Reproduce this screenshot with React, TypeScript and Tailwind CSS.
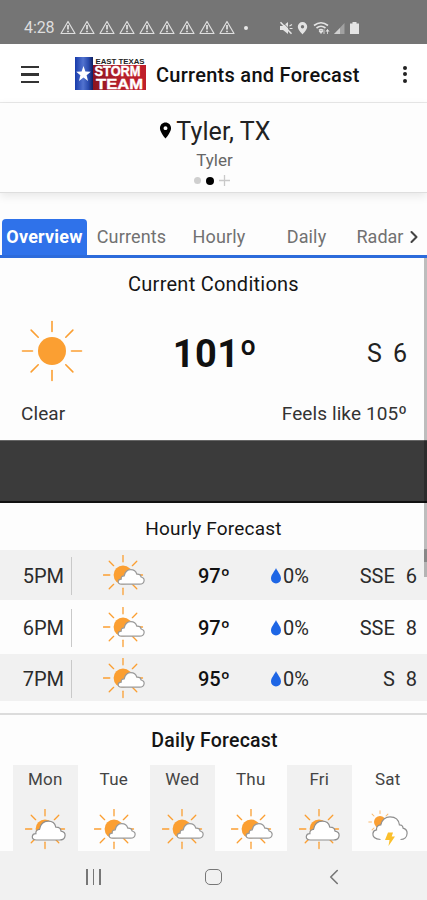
import { ChevronLeft, ChevronRight } from "lucide-react";
import { MdLocationOn } from "react-icons/md";

type Sky = "partly" | "mostly" | "storm";

const tabs = [
  { label: "Currents", className: "w-[89px] tracking-[0.15px]" },
  { label: "Hourly", className: "w-[86px] tracking-[0.15px]" },
  { label: "Daily", className: "w-[89px] tracking-[0.15px]" },
  { label: "Radar", className: "w-[58px]" },
];

const hours = [
  { time: "5PM", temp: "97º", rain: "0%", dir: "SSE", speed: 6, className: "h-[50px] bg-[#f1f1f1]" },
  { time: "6PM", temp: "97º", rain: "0%", dir: "SSE", speed: 8, className: "h-[54px]" },
  { time: "7PM", temp: "95º", rain: "0%", dir: "S", speed: 8, className: "h-[47px] bg-[#f1f1f1]" },
];

const days: { name: string; sky: Sky; shaded: boolean }[] = [
  { name: "Mon", sky: "mostly", shaded: true },
  { name: "Tue", sky: "partly", shaded: false },
  { name: "Wed", sky: "partly", shaded: true },
  { name: "Thu", sky: "partly", shaded: false },
  { name: "Fri", sky: "mostly", shaded: true },
  { name: "Sat", sky: "storm", shaded: false },
];

const angles = [0, 45, 90, 135, 180, 225, 270, 315];

function Rays({ cx, cy, from, to, width }: { cx: number; cy: number; from: number; to: number; width: number }) {
  return (
    <g stroke="#fb9f32" strokeWidth={width} strokeLinecap="round">
      {angles.map((a) => (
        <line key={a} x1={cx + from} y1={cy} x2={cx + to} y2={cy} transform={`rotate(${a} ${cx} ${cy})`} />
      ))}
    </g>
  );
}

function SunIcon() {
  return (
    <svg className="h-[62px] w-[62px]" viewBox="0 0 62 62">
      <Rays cx={31} cy={31} from={19.5} to={29.5} width={1.6} />
      <circle cx="31" cy="31" r="14" fill="#fb9f32" />
    </svg>
  );
}

function SkyIcon({ sky }: { sky: Sky }) {
  if (sky === "storm") {
    return (
      <svg className="h-[42px] w-[44px] shrink-0" viewBox="0 0 44 42">
        <g opacity="0.7">
          <Rays cx={12} cy={13} from={8.5} to={11.2} width={1} />
        </g>
        <circle cx="12" cy="13" r="6" fill="#fb9f32" />
        <path
          d="M12.5 30.5C6.5 30.500 4.600 27.200 4.900 24.600c.2-2 1.800-3.400 3.600-3.700-.3-3 1.400-4.900 4.300-5C14 10.500 18 7.800 22 7.800c5.200 0 8.800 3 9.400 8 2.100-.2 3.600 1.400 3.600 3.300 2.700.7 4.200 2.700 4.100 5.200-.1 3.500-2.600 6.200-6.600 6.200"
          fill="#fff"
          stroke="#8f8f8f"
          strokeWidth="1.200"
        />
        <path d="M20 23.500h5l-1.300 4h3.300l-6.500 9.500 1-6H17z" fill="#fbc02d" />
      </svg>
    );
  }

  return (
    <svg className="h-[42px] w-[44px] shrink-0" viewBox="0 0 44 42">
      <Rays cx={20} cy={20} from={13.2} to={19.5} width={1.3} />
      <circle cx="20" cy="20" r="9.4" fill="#fb9f32" />
      {sky === "partly" ? (
        <path
          d="M18.500 29.200c-2.500 0-3.500-1.300-3.300-2.800.2-1.600 1.600-2.300 3-2.300-.2-2 .9-3.300 3-3.300.9-4.200 3.600-6.200 6.600-6.200 3.300 0 5.200 1.800 6 4.600 2.700-.2 4 1 4.300 2.800 2.200.6 3.200 2 3 3.700-.3 2.200-2 3.500-4.600 3.500z"
          fill="#fff"
          stroke="#999"
          strokeWidth="1.200"
        />
      ) : (
        <path
          d="M11.500 31c-3 0-4.400-1.500-4.200-3.500.2-1.900 1.700-2.900 3.600-2.900-.4-2.600 1.100-4.100 3.600-4.200 1-5.500 4.600-8.200 8.700-8.200 4.300 0 6.800 2.300 7.600 5.900 3.200-.1 5 1.500 5.200 4 2.900.6 4.300 2.300 4.100 4.500-.3 2.800-2.400 4.400-5.600 4.400z"
          fill="#fff"
          stroke="#8f8f8f"
          strokeWidth="1.200"
        />
      )}
    </svg>
  );
}

function WarningIcon() {
  return (
    <svg className="h-[15px] w-[16px]" viewBox="0 0 16 15" fill="none" stroke="#dedede" strokeWidth="1.200">
      <path d="M8 1.500 15 13.500H1z" strokeLinejoin="round" />
      <path d="M8 5v4.500M8 10.800v1.500" strokeWidth="1.800" />
    </svg>
  );
}

function StatusBar() {
  return (
    <div className="flex h-[44px] items-center bg-[#757575] pt-[11px] pl-[24px] text-[#dedede]">
      <span className="w-[34px] text-[16px] tracking-[-0.1px]">4:28</span>
      <div className="flex w-[180px] gap-[3.900px] pl-[1.500px]">
        {Array.from({ length: 9 }, (_, i) => (
          <WarningIcon key={i} />
        ))}
      </div>
      <span className="ml-[6px] size-[4px] rounded-full bg-[#e8e8e8]" />
      <svg className="ml-[31px] h-[14px] w-[82px]" viewBox="0 0 82 14" fill="#e4e4e4">
        {/* muted speaker */}
        <path d="M1 5h3l5-4v12L4 9H1z" />
        <path d="M10.500 5l2.500-1.500M10.500 7.500h3" stroke="#e4e4e4" strokeWidth="1.200" />
        <path d="M1.500 1.200 12.500 12.800" stroke="#e4e4e4" strokeWidth="1.500" />
        <path d="M3.300.8 13.500 11.300" stroke="#757575" strokeWidth="1" />
        {/* location */}
        <path fillRule="evenodd" d="M23.500 1a4.700 4.700 0 0 0-4.700 4.700c0 3.300 4.700 7.600 4.700 7.600s4.700-4.300 4.700-7.600A4.700 4.700 0 0 0 23.500 1zm0 3a1.700 1.700 0 1 1 0 3.400 1.700 1.700 0 0 1 0-3.400z" />
        {/* wifi */}
        <path d="M35 4.500q7-5.500 14 0M37.500 7q4.500-3.500 9 0M40 9.300q2-1.500 4 0" fill="none" stroke="#e4e4e4" strokeWidth="1.600" />
        <path d="M42 12.500 40 10h4zM45 8.500v4.500M48.500 13V8.500M47 10.500l1.500-2 1.500 2" stroke="#e4e4e4" strokeWidth=".8" />
        {/* signal */}
        <path d="M55 13 65.500 2v11z" opacity=".4" />
        <path d="M55 13 61 7v6z" opacity=".7" />
        {/* battery */}
        <path d="M71 2.500h2.500V1h4v1.500H80V13h-9z" />
      </svg>
    </div>
  );
}

function StationLogo() {
  return (
    <svg className="h-[33px] w-[71px] overflow-visible" viewBox="0 0 71 33">
      <defs>
        <linearGradient id="blue">
          <stop offset="0" stopColor="#173bab" />
          <stop offset=".45" stopColor="#5273cf" />
          <stop offset=".75" stopColor="#284aad" />
          <stop offset="1" stopColor="#11205f" />
        </linearGradient>
        <linearGradient id="red">
          <stop offset="0" stopColor="#8c1420" />
          <stop offset=".5" stopColor="#b5202b" />
          <stop offset="1" stopColor="#c01f2a" />
        </linearGradient>
      </defs>
      <rect width="18" height="33" fill="url(#blue)" />
      <rect x="18" y="8" width="53" height="25" fill="url(#red)" />
      <path d="m8.500 9 1.900 5.500 5.400.3-4.200 3.400 1.400 5.700-4.500-3.400L4 23.900l1.400-5.700-4.200-3.400 5.400-.3z" fill="#fff" />
      <g fontFamily="Liberation Sans, sans-serif" fontWeight="bold">
        <text x="20.500" y="6.500" fontSize="7" textLength="49" lengthAdjust="spacingAndGlyphs" fill="#222">EAST TEXAS</text>
        <text x="19.500" y="19" fontSize="14.500" textLength="46" lengthAdjust="spacingAndGlyphs" fill="#fff" stroke="#fff" strokeWidth=".4">STORM</text>
        <text x="21" y="32" fontSize="15" textLength="47" lengthAdjust="spacingAndGlyphs" fill="#fff" stroke="#fff" strokeWidth=".4">TEAM</text>
      </g>
    </svg>
  );
}

function Header() {
  return (
    <header className="flex h-[59px] items-center border-b border-[#e9e9e9] bg-white">
      <div className="mt-[3px] ml-[21px] flex w-[18px] flex-col gap-[5px]">
        <span className="h-[2.500px] bg-[#333]" />
        <span className="h-[2.500px] bg-[#333]" />
        <span className="h-[2.500px] bg-[#333]" />
      </div>
      <div className="ml-[36px]">
        <StationLogo />
      </div>
      <h1 className="mt-[3px] ml-[10px] w-[204px] text-[20px] font-medium tracking-[0.27px] whitespace-nowrap text-[#111]">
        Currents and Forecast
      </h1>
      <div className="mt-[2px] ml-[43px] flex flex-col gap-[2.500px]">
        <span className="size-[4px] rounded-full bg-[#222]" />
        <span className="size-[4px] rounded-full bg-[#222]" />
        <span className="size-[4px] rounded-full bg-[#222]" />
      </div>
    </header>
  );
}

function SectionTitle({ children, className }: { children: string; className: string }) {
  return <h2 className={`text-center leading-6 text-[#151515] ${className}`}>{children}</h2>;
}

function Location() {
  return (
    <div className="relative flex h-[90px] flex-col items-center border-b border-[#dedede] pt-[14px] shadow-[0_3px_9px_rgba(0,0,0,0.09)]">
      <div className="flex items-center text-[25px] leading-[30px] tracking-[0.1px] text-[#222]">
        <MdLocationOn className="mr-px mb-[3px] size-[19px] text-black" />
        <span>Tyler, TX</span>
      </div>
      <span className="mt-[3px] pl-[2px] text-[17px] leading-[20px] text-[#666]">Tyler</span>
      <div className="mt-[5px] flex items-center pr-[3px]">
        <span className="size-[7px] rounded-full bg-[#cfcfcf]" />
        <span className="ml-[5px] size-[8px] rounded-full bg-black" />
        <svg className="ml-[5px] size-[11px]" viewBox="0 0 11 11" stroke="#c9c9c9" strokeWidth="1.300">
          <path d="M5.500 0v11M0 5.500h11" />
        </svg>
      </div>
    </div>
  );
}

function Tabs() {
  return (
    <nav className="flex h-[65px] items-end border-b-[3px] border-[#2c6bdb]">
      <span className="ml-[2px] flex h-[36px] w-[85px] items-center justify-center rounded-t-[4px] bg-[#2f72ea] pb-[2px] text-[18px] font-bold tracking-[0.2px] text-white">
        Overview
      </span>
      {tabs.map((tab) => (
        <span key={tab.label} className={`flex h-[36px] items-center justify-center pb-[2px] text-[18px] text-[#717171] ${tab.className}`}>
          {tab.label}
        </span>
      ))}
      <ChevronRight className="-ml-[5px] mb-[8px] size-[20px] text-[#444]" strokeWidth={2.5} />
    </nav>
  );
}

function CurrentConditions() {
  return (
    <section className="h-[182px] pt-[14px]">
      <SectionTitle className="text-[20px] tracking-[0.25px]">Current Conditions</SectionTitle>
      <div className="mt-[24px] grid h-[62px] grid-cols-3 items-center pr-[20px] pl-[21px]">
        <SunIcon />
        <span className="pt-[5px] pl-[2px] text-center text-[38px] leading-none font-bold tracking-[0.4px] text-[#111]">101º</span>
        <span className="pt-[5px] text-right text-[25px] text-[#222]">
          S<span className="ml-[11px]">6</span>
        </span>
      </div>
      <div className="mt-[18px] flex justify-between pr-[20px] pl-[21px] text-[19px] tracking-[0.1px] text-[#333]">
        <span>Clear</span>
        <span>Feels like 105º</span>
      </div>
    </section>
  );
}

function HourlyForecast() {
  return (
    <section className="h-[212px] border-b-2 border-[#dcdcdc] pt-[13px]">
      <SectionTitle className="pt-px text-[19px] tracking-[0.2px]">Hourly Forecast</SectionTitle>
      <div className="mt-[9px]">
        {hours.map((hour) => (
          <div key={hour.time} className={`flex items-center pt-[2px] text-[20px] text-[#2b2b2b] ${hour.className}`}>
            <span className="flex h-[38px] w-[72px] items-center justify-end border-r border-[#c9c9c9] pr-[7px]">{hour.time}</span>
            <span className="ml-[31px] flex h-[42px] items-center">
              <SkyIcon sky="partly" />
            </span>
            <span className="ml-[51px] w-[72px] font-medium text-[#111]">{hour.temp}</span>
            <svg className="h-[16px] w-[12px]" viewBox="0 0 12 16">
              <path d="M6 0C7 3 11 6.500 11 10.500A5 5 0 0 1 1 10.500C1 6.500 5 3 6 0z" fill="#1e66e5" />
            </svg>
            <span className="ml-px w-[60px] text-[20px]">{hour.rain}</span>
            <span className="flex flex-1 justify-end gap-[11px] pr-[10px]">
              <span>{hour.dir}</span>
              <span>{hour.speed}</span>
            </span>
          </div>
        ))}
      </div>
    </section>
  );
}

function DailyForecast() {
  return (
    <section className="h-[136px] overflow-hidden pt-[14px]">
      <SectionTitle className="pl-[2px] text-[19.500px] font-medium tracking-[0.2px]">Daily Forecast</SectionTitle>
      <div className="mt-[12px] flex pl-[11px]">
        {days.map((day) => (
          <div key={day.name} className="w-[68.500px] px-[2px]">
            <div className={`flex h-[86px] flex-col items-center pt-[4px] ${day.shaded ? "bg-[#f1f1f1]" : ""}`}>
              <span className="text-[17px] leading-5 tracking-[0.2px] text-[#444]">{day.name}</span>
              <span className="mt-[20px] pl-[4px]">
                <SkyIcon sky={day.sky} />
              </span>
            </div>
          </div>
        ))}
      </div>
    </section>
  );
}

function NavigationBar() {
  return (
    <div className="flex h-[49px] items-center bg-[#f1f1f1] pt-[2px] text-[#777]">
      <div className="ml-[86px] flex gap-[5px]">
        <span className="h-[16px] w-[1.500px] bg-[#777]" />
        <span className="h-[16px] w-[1.500px] bg-[#777]" />
        <span className="h-[16px] w-[1.500px] bg-[#777]" />
      </div>
      <span className="ml-[104px] h-[16px] w-[17px] rounded-[5px] border-[1.500px] border-[#777]" />
      <ChevronLeft className="ml-[99px] h-[26px] w-[26px]" strokeWidth={1.5} />
    </div>
  );
}

export default function App() {
  return (
    <div className="relative h-[900px] w-[427px] overflow-hidden bg-[#fdfdfd] font-['Roboto',sans-serif]">
      <StatusBar />
      <Header />
      <Location />
      <Tabs />
      <CurrentConditions />
      <div className="h-[63px] border-t border-b-2 border-t-[#666] border-b-[#111] bg-[#3b3b3b]" />
      <HourlyForecast />
      <DailyForecast />
      <NavigationBar />

      {/* scrollbar */}
      <div className="absolute top-[258px] right-0 h-[319px] w-[3px] bg-black/25" />
      <div className="absolute top-[549px] right-0 h-[13px] w-[3px] bg-black/25" />
    </div>
  );
}
